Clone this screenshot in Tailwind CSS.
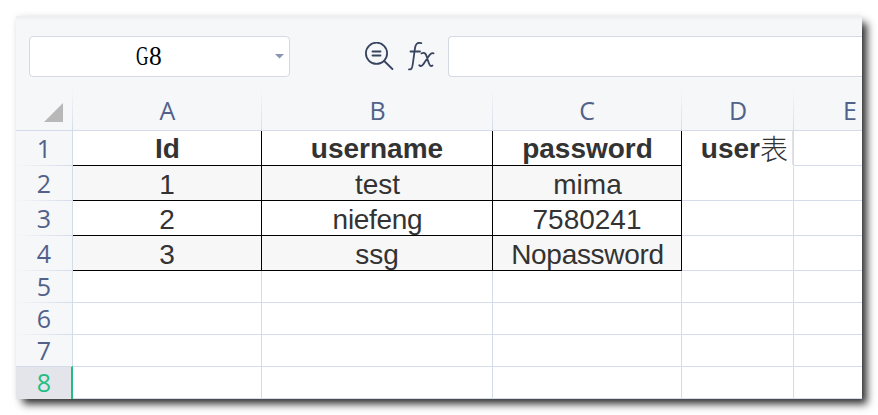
<!DOCTYPE html>
<html lang="zh">
<head>
<meta charset="utf-8">
<title>user表</title>
<script src="https://cdn.jsdelivr.net/npm/@tailwindcss/browser@4"></script>
</head>
<body class="h-[415px] w-[878px] overflow-hidden bg-white p-4">
<main class="h-[383px] w-[846px] overflow-hidden bg-[#f5f7f9] shadow-[0_0_6px_rgba(0,0,0,0.08),6px_6px_8px_-1px_#333] font-['Liberation_Sans','Noto_Sans_CJK_SC',sans-serif]">
  <div class="flex h-[74px] items-start bg-linear-to-b from-[#eceef0] to-[#f5f7f9] to-[5px] pl-[13px] pt-5">
    <div class="flex h-[41px] w-[261px] shrink-0 items-center rounded-[4px] border border-[#d5d9e1] bg-white pr-[5px]">
      <div class="flex flex-1 justify-center pr-2 font-['Liberation_Serif',serif] text-[27px] leading-[39px] text-black">
        <span class="inline-block w-[13px]"><span class="inline-block origin-left scale-x-[0.64]">G</span></span><span class="inline-block w-[13px]"><span class="inline-block origin-left scale-x-[0.94]">8</span></span>
      </div>
      <svg class="h-[5px] w-[9px]" viewBox="0 0 9 5" fill="#8995b2"><path d="M0 0h9L4.5 4.500z"/></svg>
    </div>
    <svg class="ml-[74px] mt-1.5 h-8 w-[72px] shrink-0" viewBox="0 0 72 32" fill="none" stroke="#38445f" stroke-width="1.8" stroke-linecap="round">
      <circle cx="12.500" cy="11.300" r="10.600"/>
      <path d="M20.200 19l8.200 8M8.500 9.500h8M8.500 13.500h8"/>
      <path d="M57.300 1.200C53.500 0 51.700 2 51.100 5.500L48.800 22C48.100 26.500 47.500 28 45 27.300M46.500 9.500h9.500"/>
      <path d="M57.500 11.300C60 10.300 61.500 11 62.300 13.500L64.800 21C65.800 23.800 66.800 24.700 68.500 23.500M69.600 11.300C67.300 10.500 66 12 64.500 14.500L60.500 20.500C58.700 23.700 57 24.800 55.200 23.300"/>
    </svg>
    <div class="ml-3 h-[41px] flex-1 rounded-l-[4px] border border-r-0 border-[#d5d9e1] bg-white"></div>
  </div>

  <div class="grid h-[41px] grid-cols-[57px_189px_231px_189px_112px_68px] border-b border-[#d4dbea] font-['Open_Sans','Noto_Sans',sans-serif] text-[25px] leading-[41px] text-[#51618a] text-center">
    <div class="flex items-end justify-end border-r pb-[9px] pr-[9px] [border-image:linear-gradient(to_bottom,#f5f7f9,#d4dbea)_1]"><svg class="h-[19px] w-[19px]" viewBox="0 0 19 19" fill="#b8b8b8"><path d="M19 0v19H0z"/></svg></div>
    <div class="border-r pl-px [border-image:linear-gradient(to_bottom,#f5f7f9,#d4dbea)_1]">A</div>
    <div class="border-r pl-px [border-image:linear-gradient(to_bottom,#f5f7f9,#d4dbea)_1]">B</div>
    <div class="border-r [border-image:linear-gradient(to_bottom,#f5f7f9,#d4dbea)_1]">C</div>
    <div class="border-r pl-px [border-image:linear-gradient(to_bottom,#f5f7f9,#d4dbea)_1]">D</div>
    <div class="pl-[49px] text-left">E</div>
  </div>

  <div class="flex">
    <div class="w-[57px] text-center font-['Open_Sans','Noto_Sans',sans-serif] text-[25px] text-[#51618a]">
      <div class="h-[35px] border-b border-r leading-[35px] [border-image:linear-gradient(to_right,#f5f7f9,#d4dbea)_1]">1</div>
      <div class="h-[35px] border-b border-r leading-[35px] [border-image:linear-gradient(to_right,#f5f7f9,#d4dbea)_1]">2</div>
      <div class="h-[35px] border-b border-r leading-[35px] [border-image:linear-gradient(to_right,#f5f7f9,#d4dbea)_1]">3</div>
      <div class="h-[35px] border-b border-r leading-[35px] [border-image:linear-gradient(to_right,#f5f7f9,#d4dbea)_1]">4</div>
      <div class="h-8 border-b border-r leading-[31px] [border-image:linear-gradient(to_right,#f5f7f9,#d4dbea)_1]">5</div>
      <div class="h-8 border-b border-r leading-[31px] [border-image:linear-gradient(to_right,#f5f7f9,#d4dbea)_1]">6</div>
      <div class="h-8 border-b border-r leading-[31px] [border-image:linear-gradient(to_right,#f5f7f9,#d4dbea)_1]">7</div>
      <div class="-mt-px h-[34px] border-r-2 border-t border-r-[#22bd82] border-t-[#d4dbea] bg-[#e3e5ea] pl-px leading-[31px] text-[#22bd82]">8</div>
    </div>
    <div class="grid flex-1 grid-cols-[189px_231px_189px_112px_68px] grid-rows-[35px_35px_35px_35px_32px_32px_32px_32px] bg-white text-center text-[28px] leading-[38px] text-[#333] *:whitespace-nowrap *:border-b *:border-r *:border-[#d4dbea]">
      <div class="border-black! pl-px font-bold leading-[36px]">Id</div><div class="border-black! font-bold leading-[36px]">username</div><div class="border-black! pl-px font-bold leading-[36px]">password</div>
      <div class="flex justify-end border-b-white! pr-[5px] font-bold leading-[36px] shadow-[inset_-1px_0_#e0e2e6]">user<span class="w-7 font-['Noto_Sans_CJK_SC',sans-serif] font-light leading-[34px]">表</span></div><div class="border-r-0!"></div>
      <div class="border-black! bg-[#f7f7f7]">1</div><div class="border-black! bg-[#f7f7f7] pl-px">test</div><div class="border-black! bg-[#f7f7f7] pl-px">mima</div><div></div><div class="border-r-0!"></div>
      <div class="border-black!">2</div><div class="border-black! pl-px tracking-[-0.3px]">niefeng</div><div class="border-black!">7580241</div><div></div><div class="border-r-0!"></div>
      <div class="border-black! bg-[#f7f7f7]">3</div><div class="border-black! bg-[#f7f7f7]">ssg</div><div class="border-black! bg-[#f7f7f7] pl-px tracking-[-0.3px]">Nopassword</div><div></div><div class="border-r-0!"></div>
      <div></div><div></div><div></div><div></div><div class="border-r-0!"></div>
      <div></div><div></div><div></div><div></div><div class="border-r-0!"></div>
      <div></div><div></div><div></div><div></div><div class="border-r-0!"></div>
      <div></div><div></div><div></div><div></div><div class="border-r-0!"></div>
    </div>
  </div>
</main>
</body>
</html>
